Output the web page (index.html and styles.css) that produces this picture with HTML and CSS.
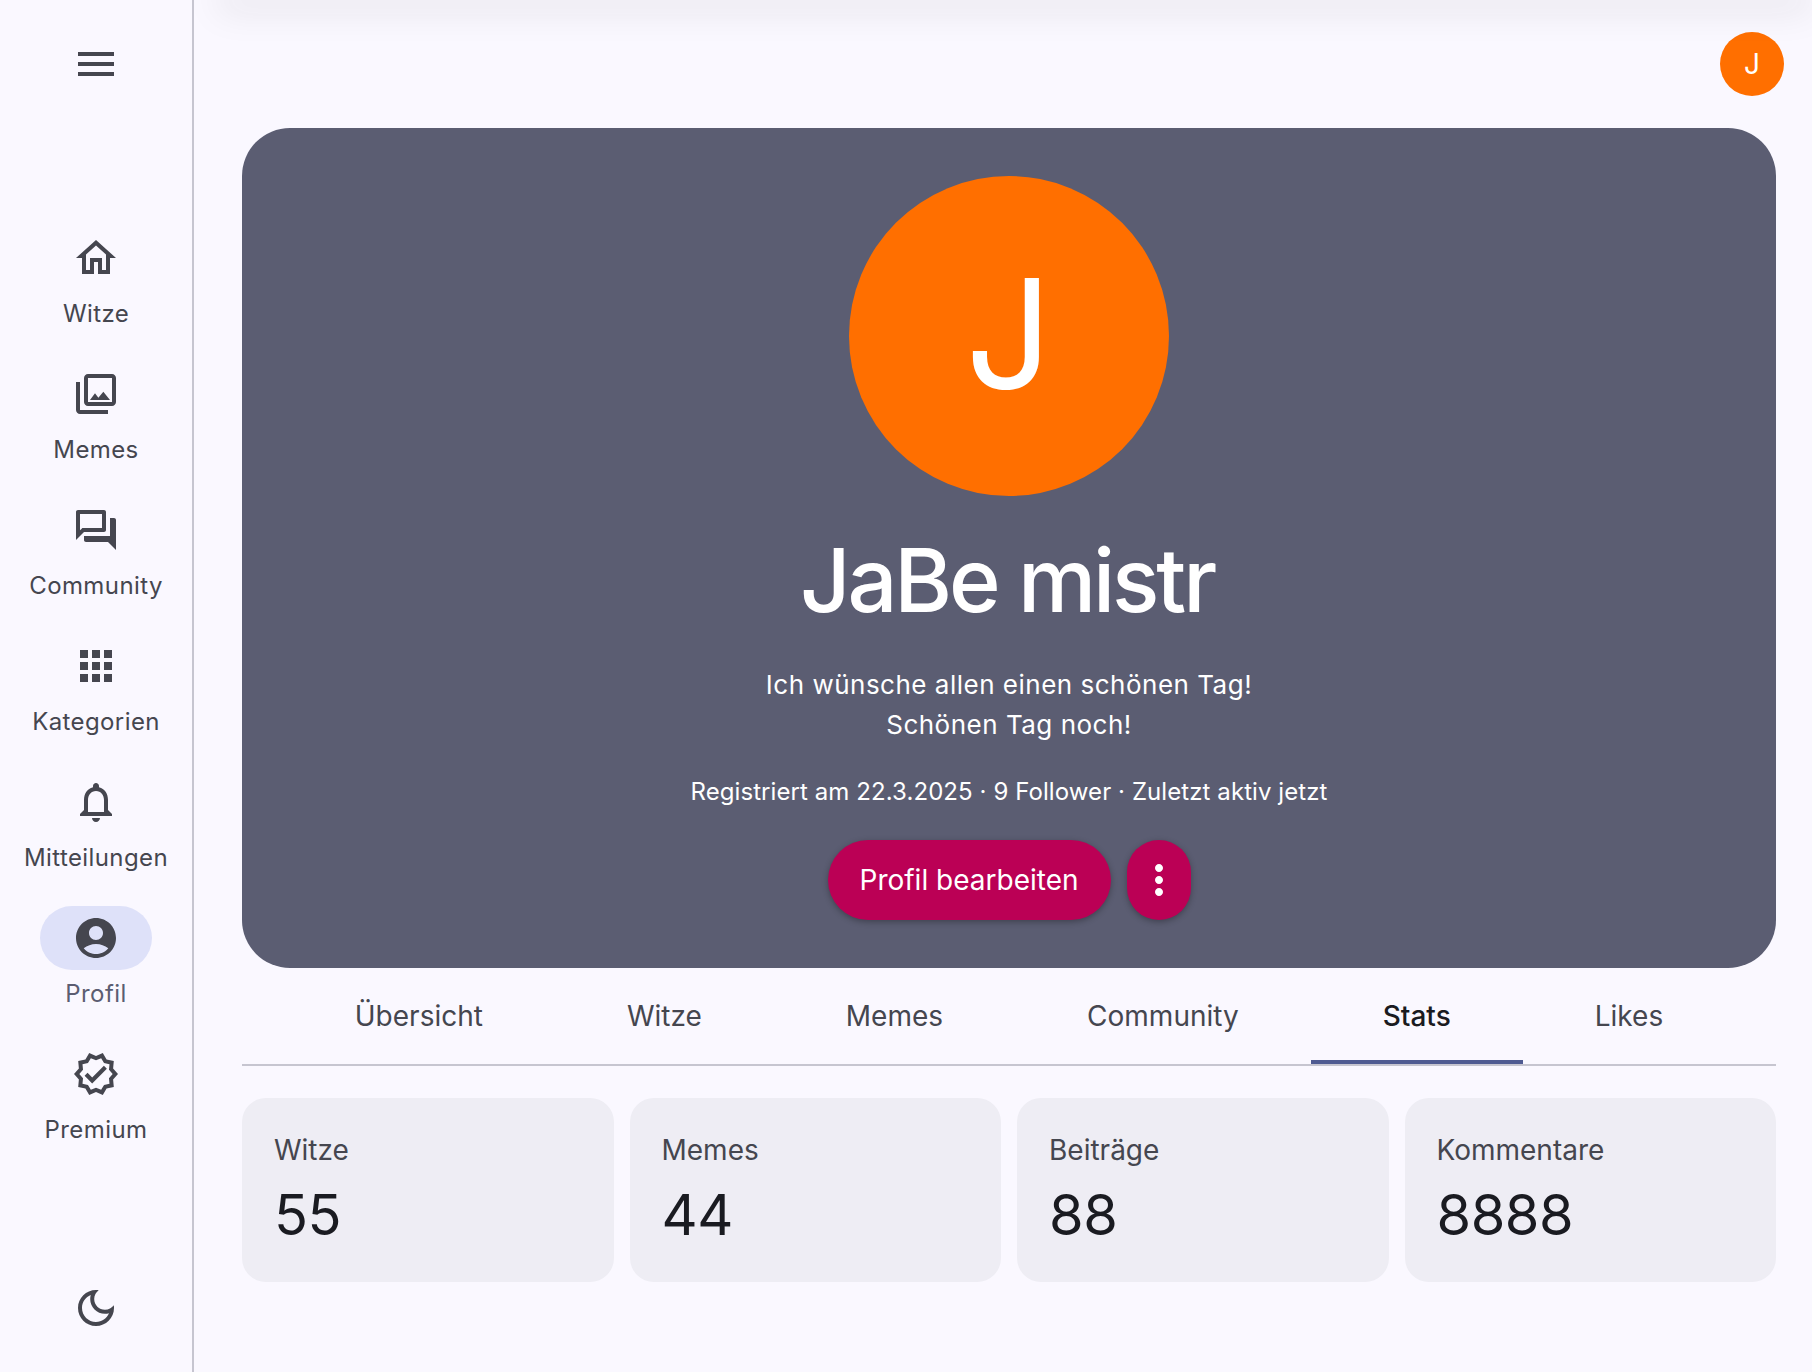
FILE: index.html
```html
<!DOCTYPE html>
<html lang="de">
<head>
    <meta charset="UTF-8">
    <meta name="viewport" content="width=device-width, initial-scale=1.0">
    <title>Profil</title>
    <link rel="stylesheet" href="styles.css">
</head>
<body>
    <nav class="rail">
        <button class="menu-btn" aria-label="Menü">
            <svg class="icon" viewBox="0 0 24 24"><path d="M3 18h18v-2H3v2zm0-5h18v-2H3v2zm0-7v2h18V6H3z"/></svg>
        </button>
        <ul class="rail-list">
            <li class="rail-item">
                <span class="rail-pill"><svg class="icon" viewBox="0 0 24 24"><path d="M12 5.69l5 4.5V18h-2v-6H9v6H7v-7.81l5-4.5M12 3L2 12h3v8h6v-6h2v6h6v-8h3L12 3z"/></svg></span>
                <span class="rail-label">Witze</span>
            </li>
            <li class="rail-item">
                <span class="rail-pill"><svg class="icon" viewBox="0 0 24 24"><path d="M20 4v12H8V4h12m0-2H8c-1.1 0-2 .9-2 2v12c0 1.1.9 2 2 2h12c1.1 0 2-.9 2-2V4c0-1.1-.9-2-2-2zm-8.5 9.67l1.69 2.26 2.48-3.1L19 15H9zM2 6v14c0 1.1.9 2 2 2h14v-2H4V6H2z"/></svg></span>
                <span class="rail-label">Memes</span>
            </li>
            <li class="rail-item">
                <span class="rail-pill"><svg class="icon" viewBox="0 0 24 24"><path d="M15 4v7H5.17l-.59.59-.58.58V4h11m1-2H3c-.55 0-1 .45-1 1v14l4-4h10c.55 0 1-.45 1-1V3c0-.55-.45-1-1-1zm5 4h-2v9H6v2c0 .55.45 1 1 1h11l4 4V7c0-.55-.45-1-1-1z"/></svg></span>
                <span class="rail-label">Community</span>
            </li>
            <li class="rail-item">
                <span class="rail-pill"><svg class="icon" viewBox="0 0 24 24"><path d="M4 8h4V4H4v4zm6 12h4v-4h-4v4zm-6 0h4v-4H4v4zm0-6h4v-4H4v4zm6 0h4v-4h-4v4zm6-10v4h4V4h-4zm-6 4h4V4h-4v4zm6 6h4v-4h-4v4zm0 6h4v-4h-4v4z"/></svg></span>
                <span class="rail-label">Kategorien</span>
            </li>
            <li class="rail-item">
                <span class="rail-pill"><svg class="icon" viewBox="0 0 24 24"><path d="M12 22c1.1 0 2-.9 2-2h-4c0 1.1.9 2 2 2zm6-6v-5c0-3.07-1.63-5.64-4.5-6.32V4c0-.83-.67-1.5-1.5-1.5s-1.5.67-1.5 1.5v.68C7.64 5.36 6 7.92 6 11v5l-2 2v1h16v-1l-2-2zm-2 1H8v-6c0-2.48 1.51-4.5 4-4.5s4 2.02 4 4.5v6z"/></svg></span>
                <span class="rail-label">Mitteilungen</span>
            </li>
            <li class="rail-item active">
                <span class="rail-pill"><svg class="icon" viewBox="0 0 24 24"><path d="M12 2C6.48 2 2 6.48 2 12s4.48 10 10 10 10-4.48 10-10S17.52 2 12 2zm0 4c1.93 0 3.5 1.57 3.5 3.5S13.93 13 12 13s-3.5-1.57-3.5-3.5S10.07 6 12 6zm0 14c-2.03 0-4.43-.82-6.14-2.88C7.55 15.8 9.68 15 12 15s4.45.8 6.14 2.12C16.43 19.18 14.03 20 12 20z"/></svg></span>
                <span class="rail-label">Profil</span>
            </li>
            <li class="rail-item">
                <span class="rail-pill"><svg class="icon" viewBox="0 0 24 24"><path d="M23 12l-2.44-2.79.34-3.69-3.61-.82-1.89-3.2L12 2.96 8.6 1.5 6.71 4.69 3.1 5.5l.34 3.7L1 12l2.44 2.79-.34 3.7 3.61.82L8.6 22.5l3.4-1.47 3.4 1.46 1.89-3.19 3.61-.82-.34-3.69L23 12zm-4.51 2.11l.26 2.79-2.74.62-1.43 2.41L12 18.82l-2.58 1.11-1.43-2.41-2.74-.62.26-2.8L3.66 12l1.85-2.12-.26-2.78 2.74-.61 1.43-2.41L12 5.18l2.58-1.11 1.43 2.41 2.74.62-.26 2.79L20.34 12l-1.85 2.11zM10.09 13.75l-2.32-2.33-1.48 1.49 3.8 3.81 7.34-7.36-1.48-1.49z"/></svg></span>
                <span class="rail-label">Premium</span>
            </li>
        </ul>
        <button class="theme-btn" aria-label="Dunkelmodus">
            <svg class="icon" viewBox="0 0 24 24"><path d="M9.37 5.51c-.18.64-.27 1.31-.27 1.99 0 4.08 3.32 7.4 7.4 7.4.68 0 1.35-.09 1.99-.27C17.45 17.19 14.93 19 12 19c-3.86 0-7-3.14-7-7 0-2.93 1.81-5.45 4.37-6.49zM12 3c-4.97 0-9 4.03-9 9s4.03 9 9 9 9-4.03 9-9c0-.46-.04-.92-.1-1.36-.98 1.37-2.58 2.26-4.4 2.26-2.98 0-5.4-2.42-5.4-5.4 0-1.81.89-3.42 2.26-4.4-.44-.06-.9-.1-1.36-.1z"/></svg>
        </button>
    </nav>

    <main class="main">
        <div class="top-shadow"></div>
        <header class="topbar">
            <div class="avatar-small">J</div>
        </header>

        <div class="content">
            <section class="hero">
                <div class="avatar-big">J</div>
                <h1 class="hero-name">JaBe mistr</h1>
                <p class="hero-bio">Ich wünsche allen einen schönen Tag!<br>Schönen Tag noch!</p>
                <p class="hero-meta">Registriert am 22.3.2025 · 9 Follower · Zuletzt aktiv jetzt</p>
                <div class="hero-actions">
                    <button class="btn-edit">Profil bearbeiten</button>
                    <button class="btn-more" aria-label="Mehr">
                        <svg class="icon" viewBox="0 0 24 24"><path d="M12 8c1.1 0 2-.9 2-2s-.9-2-2-2-2 .9-2 2 .9 2 2 2zm0 2c-1.1 0-2 .9-2 2s.9 2 2 2 2-.9 2-2-.9-2-2-2zm0 6c-1.1 0-2 .9-2 2s.9 2 2 2 2-.9 2-2-.9-2-2-2z"/></svg>
                    </button>
                </div>
            </section>

            <div class="tabs">
                <a class="tab">Übersicht</a>
                <a class="tab">Witze</a>
                <a class="tab">Memes</a>
                <a class="tab">Community</a>
                <a class="tab active">Stats</a>
                <a class="tab">Likes</a>
            </div>

            <section class="stats">
                <div class="stat-card">
                    <div class="stat-label">Witze</div>
                    <div class="stat-value">55</div>
                </div>
                <div class="stat-card">
                    <div class="stat-label">Memes</div>
                    <div class="stat-value">44</div>
                </div>
                <div class="stat-card">
                    <div class="stat-label">Beiträge</div>
                    <div class="stat-value">88</div>
                </div>
                <div class="stat-card">
                    <div class="stat-label">Kommentare</div>
                    <div class="stat-value">8888</div>
                </div>
            </section>
        </div>
    </main>
</body>
</html>
```

FILE: styles.css
```css
* {
    box-sizing: border-box;
}

html, body {
    height: 100%;
}

body {
    margin: 0;
    display: flex;
    font-family: Inter, "Noto Sans", sans-serif;
    background-color: #faf8ff;
    color: #1a1b21;
    overflow: hidden;
}

button {
    border: none;
    background: none;
    padding: 0;
    font-family: inherit;
    cursor: pointer;
}

.icon {
    display: block;
    width: 48px;
    height: 48px;
    fill: currentColor;
}

/* Navigation */
.rail {
    width: 194px;
    height: 100%;
    flex-shrink: 0;
    display: flex;
    flex-direction: column;
    align-items: center;
    border-right: 2px solid #c6c5d0;
    color: #45464f;
    padding-top: 40px;
}

.menu-btn {
    color: inherit;
}

.rail-list {
    list-style: none;
    margin: 138px 0 0;
    padding: 0;
    display: flex;
    flex-direction: column;
    align-items: center;
    gap: 32px;
}

.rail-item {
    display: flex;
    flex-direction: column;
    align-items: center;
    width: 112px;
}

.rail-pill {
    width: 112px;
    height: 64px;
    border-radius: 32px;
    display: flex;
    align-items: center;
    justify-content: center;
}

.rail-label {
    margin-top: 8px;
    font-size: 24px;
    line-height: 32px;
    letter-spacing: 0.4px;
    white-space: nowrap;
}

.rail-item.active .rail-pill {
    background-color: #dee1f9;
}

.rail-item.active .rail-label {
    color: #5b5d72;
}

.theme-btn {
    color: inherit;
    margin-top: auto;
    margin-bottom: 40px;
}

/* Main */
.main {
    flex: 1;
    min-width: 0;
    position: relative;
    padding-right: 36px;
    overflow: hidden;
}

.top-shadow {
    position: absolute;
    left: 24px;
    right: 0;
    top: -20px;
    height: 20px;
    box-shadow: 0 10px 36px rgba(26, 27, 33, 0.1);
}

.topbar {
    height: 128px;
    display: flex;
    justify-content: flex-end;
    padding-top: 32px;
    margin-right: -8px;
}

.avatar-small {
    width: 64px;
    height: 64px;
    border-radius: 50%;
    background-color: #ff6f00;
    color: #fff;
    font-size: 28px;
    line-height: 64px;
    text-align: center;
}

.content {
    padding-left: 48px;
}

.hero {
    height: 840px;
    border-radius: 48px;
    background-color: #5b5d72;
    color: #fff;
    padding-top: 48px;
    display: flex;
    flex-direction: column;
    align-items: center;
    text-align: center;
}

.avatar-big {
    width: 320px;
    height: 320px;
    border-radius: 50%;
    background-color: #ff6f00;
    font-size: 152px;
    line-height: 316px;
}

.hero-name {
    margin: 36px 4px 0 0;
    font-size: 88px;
    line-height: 96px;
    font-weight: 500;
    letter-spacing: -3.1px;
}

.hero-bio {
    margin: 37px 0 0;
    font-size: 26px;
    line-height: 40px;
    letter-spacing: 0.5px;
}

.hero-meta {
    margin: 31px 0 0;
    font-size: 24px;
    line-height: 32px;
    letter-spacing: 0.08px;
}

.hero-actions {
    margin-top: 32px;
    display: flex;
    gap: 16px;
}

.btn-edit {
    height: 80px;
    padding: 0 32px;
    border-radius: 40px;
    background-color: #bb0055;
    color: #fff;
    font-size: 28px;
    box-shadow: 0 2px 6px rgba(0, 0, 0, 0.3);
}

.btn-more {
    width: 64px;
    height: 80px;
    border-radius: 32px;
    background-color: #bb0055;
    color: #fff;
    display: flex;
    align-items: center;
    justify-content: center;
    box-shadow: 0 2px 6px rgba(0, 0, 0, 0.3);
}

/* Tabs */
.tabs {
    height: 98px;
    display: flex;
    justify-content: center;
    border-bottom: 2px solid #c6c5d0;
}

.tab {
    padding: 0 72px;
    height: 96px;
    display: flex;
    align-items: center;
    font-size: 28px;
    color: #45464f;
}

.tab.active {
    color: #1a1b21;
    font-weight: 500;
    box-shadow: inset 0 -4px 0 #4f5b92;
}

/* Stats */
.stats {
    margin-top: 32px;
    display: grid;
    grid-template-columns: repeat(4, 1fr);
    gap: 16px;
}

.stat-card {
    height: 184px;
    padding: 32px;
    border-radius: 24px;
    background-color: #eeedf4;
}

.stat-label {
    font-size: 28px;
    line-height: 40px;
    color: #45464f;
}

.stat-value {
    margin-top: 13px;
    font-size: 56px;
    line-height: 64px;
    color: #1a1b21;
    letter-spacing: -0.5px;
}
```
